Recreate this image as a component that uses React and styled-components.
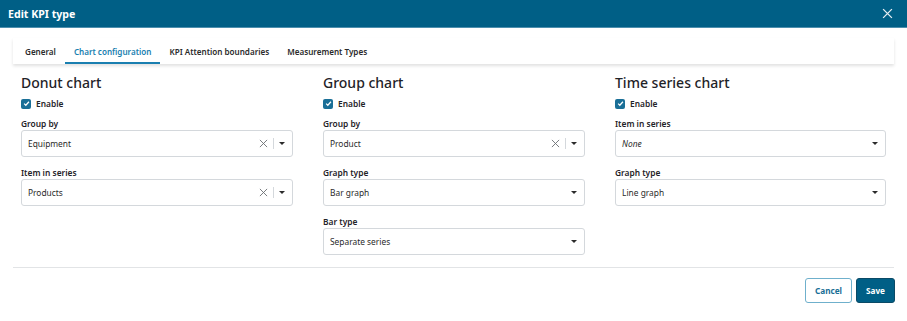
import React from 'react'
import styled, { createGlobalStyle } from 'styled-components'

const GlobalStyle = createGlobalStyle`
  html, body {
    margin: 0;
    padding: 0;
    background: #fff;
    font-family: "Noto Sans", "Open Sans", sans-serif;
    color: #1f2328;
  }
`

const Dialog = styled.div`
  width: 907px;
  height: 321px;
  display: flex;
  flex-direction: column;
  background: #fff;
  overflow: hidden;
`

const Header = styled.div`
  height: 27px;
  background: #005f86;
  border-bottom: 1px solid #4d8fae;
  display: flex;
  align-items: center;
  justify-content: space-between;
  padding: 0 14px 0 8px;
  color: #fff;
`

const Title = styled.h1`
  margin: 0;
  font-size: 10.6px;
  font-weight: 700;
`

const CloseBtn = styled.button`
  border: 0;
  background: none;
  padding: 0;
  display: flex;
  color: #e6eef3;
`

const Body = styled.div`
  padding: 10px 13px 0;
  display: flex;
  flex-direction: column;
`

const TabBar = styled.div`
  height: 26px;
  display: flex;
  align-items: stretch;
  padding-left: 3px;
  box-shadow: 0 2px 3px rgba(0, 0, 0, 0.12);
  margin-bottom: 10px;
`

const Tab = styled.div`
  padding: 2px 9px 0;
  display: flex;
  align-items: center;
  font-size: 8.1px;
  font-weight: 600;
  color: ${p => (p.$active ? '#1a7fb0' : '#2b2b2b')};
  border-bottom: 2px solid ${p => (p.$active ? '#1a7fb0' : 'transparent')};
  box-sizing: border-box;
`

const Columns = styled.div`
  display: grid;
  grid-template-columns: 272px 262px 271px;
  column-gap: 30px;
  padding: 0 8px;
  height: 193px;
`

const Column = styled.div`
  display: flex;
  flex-direction: column;
`

const ChartTitle = styled.h2`
  margin: 0;
  font-size: 14px;
  font-weight: 500;
  line-height: 18px;
  color: #1f2328;
`

const CheckRow = styled.label`
  display: flex;
  align-items: center;
  gap: 5px;
  font-size: 8.4px;
  font-weight: 600;
  margin-top: 6px;
  height: 11px;
`

const Box = styled.span`
  width: 10px;
  height: 10px;
  border-radius: 2px;
  background: #1a6f97;
  display: flex;
  align-items: center;
  justify-content: center;
`

const Field = styled.div`
  margin-top: ${p => (p.$first ? '9px' : '10px')};
  display: flex;
  flex-direction: column;
`

const Label = styled.div`
  font-size: 8.4px;
  font-weight: 600;
  line-height: 11px;
  margin-bottom: 1px;
`

const Select = styled.div`
  height: 27px;
  box-sizing: border-box;
  border: 1px solid #d4d8dc;
  border-radius: 3px;
  display: flex;
  align-items: center;
  padding: 0 6px;
  font-size: 8.4px;
  color: #2b2b2b;
  font-style: ${p => (p.$empty ? 'italic' : 'normal')};
`

const Value = styled.span`
  flex: 1;
`

const Clear = styled.span`
  display: flex;
  color: #6b6f73;
  padding-right: 5px;
  border-right: 1px solid #d4d8dc;
  height: 11px;
  align-items: center;
  margin-right: 5px;
`

const Caret = styled.span`
  width: 0;
  height: 0;
  border-left: 3px solid transparent;
  border-right: 3px solid transparent;
  border-top: 3px solid #2b2b2b;
  margin-right: 1px;
`

const Divider = styled.div`
  height: 1px;
  background: #e2e4e6;
`

const Footer = styled.div`
  display: flex;
  justify-content: flex-end;
  gap: 4px;
  padding: 10px 0 0;
  margin-right: -1px;
`

const Button = styled.button`
  height: 25px;
  box-sizing: border-box;
  padding: 0 9px;
  border-radius: 3px;
  font-family: inherit;
  font-size: 8.2px;
  font-weight: 700;
  border: 1px solid ${p => (p.$primary ? '#0b4a66' : '#6fb0cc')};
  background: ${p => (p.$primary ? '#005f86' : '#fff')};
  color: ${p => (p.$primary ? '#fff' : '#1a6f97')};
`

const X = ({ size = 8, stroke = 1 }) => (
  <svg width={size} height={size} viewBox="0 0 10 10">
    <path d="M1 1L9 9M9 1L1 9" stroke="currentColor" strokeWidth={stroke} fill="none" />
  </svg>
)

const Check = () => (
  <svg width="7" height="7" viewBox="0 0 8 8">
    <path d="M1.3 4.2L3.2 6L6.8 2" stroke="#fff" strokeWidth="1.4" fill="none" />
  </svg>
)

const SelectField = ({ label, value, clearable, empty, first }) => (
  <Field $first={first}>
    <Label>{label}</Label>
    <Select $empty={empty}>
      <Value>{value}</Value>
      {clearable && (
        <Clear>
          <X size={9} stroke={1} />
        </Clear>
      )}
      <Caret />
    </Select>
  </Field>
)

const charts = [
  {
    title: 'Donut chart',
    fields: [
      { label: 'Group by', value: 'Equipment', clearable: true },
      { label: 'Item in series', value: 'Products', clearable: true },
    ],
  },
  {
    title: 'Group chart',
    fields: [
      { label: 'Group by', value: 'Product', clearable: true },
      { label: 'Graph type', value: 'Bar graph' },
      { label: 'Bar type', value: 'Separate series' },
    ],
  },
  {
    title: 'Time series chart',
    fields: [
      { label: 'Item in series', value: 'None', empty: true },
      { label: 'Graph type', value: 'Line graph' },
    ],
  },
]

const tabs = ['General', 'Chart configuration', 'KPI Attention boundaries', 'Measurement Types']

export default function App() {
  return (
    <>
      <GlobalStyle />
      <Dialog>
        <Header>
          <Title>Edit KPI type</Title>
          <CloseBtn>
            <X size={11} stroke={1.2} />
          </CloseBtn>
        </Header>
        <Body>
          <TabBar>
            {tabs.map(t => (
              <Tab key={t} $active={t === 'Chart configuration'}>
                {t}
              </Tab>
            ))}
          </TabBar>
          <Columns>
            {charts.map(c => (
              <Column key={c.title}>
                <ChartTitle>{c.title}</ChartTitle>
                <CheckRow>
                  <Box>
                    <Check />
                  </Box>
                  Enable
                </CheckRow>
                {c.fields.map((f, i) => (
                  <SelectField key={f.label} first={i === 0} {...f} />
                ))}
              </Column>
            ))}
          </Columns>
          <Divider />
          <Footer>
            <Button>Cancel</Button>
            <Button $primary>Save</Button>
          </Footer>
        </Body>
      </Dialog>
    </>
  )
}
